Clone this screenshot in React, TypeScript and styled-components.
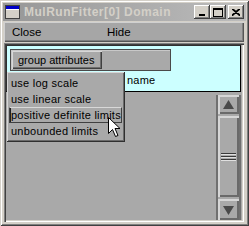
import React from 'react';
import styled, { createGlobalStyle } from 'styled-components';

const GlobalStyle = createGlobalStyle`
  html, body {
    margin: 0;
    padding: 0;
    background: #d4d0c8;
  }
  * {
    box-sizing: border-box;
  }
`;

const GREY = '#a9a9a9';

const Window = styled.div`
  position: relative;
  width: 249px;
  height: 226px;
  padding: 3px 3px 4px 3px;
  background: #d4d0c8;
  box-shadow: inset 1px 1px #d4d0c8, inset -1px -1px #404040, inset 2px 2px #ffffff,
    inset -2px -2px #808080;
  display: flex;
  flex-direction: column;
  font-family: 'Liberation Sans', Arial, sans-serif;
  font-size: 11px;
  color: #000;
`;

const TitleBar = styled.div`
  height: 18px;
  display: flex;
  align-items: center;
  padding: 0 2px 0 2px;
  background: linear-gradient(90deg, #979797 0%, #a9a9a9 50%, #bcbcbc 100%);
`;

const TitleText = styled.span`
  flex: 1;
  margin-left: 4px;
  font-weight: bold;
  font-size: 12px;
  letter-spacing: 0.5px;
  color: #d4d0c8;
  white-space: nowrap;
`;

const CaptionButton = styled.button<{ $gap?: boolean }>`
  width: 16px;
  height: 14px;
  padding: 0;
  margin-left: ${(p) => (p.$gap ? '2px' : '0')};
  border: none;
  background: #d4d0c8;
  box-shadow: inset -1px -1px #404040, inset 1px 1px #ffffff, inset -2px -2px #808080;
  display: flex;
  align-items: center;
  justify-content: center;
`;

const MenuBar = styled.div`
  height: 20px;
  margin: 1px 2px 0 1px;
  display: flex;
  align-items: center;
  background: #a6a6a6;
  box-shadow: inset 1px 1px #d0d0d0, inset -1px -1px #555555, inset -2px -2px #808080;
`;

const MenuItem = styled.span<{ $w: number }>`
  width: ${(p) => p.$w}px;
  padding-left: 8px;
  font-size: 11.5px;
`;

const ContentFrame = styled.div`
  flex: 1;
  margin: 1px 2px 0 1px;
  padding: 2px;
  display: flex;
  flex-direction: column;
  background: ${GREY};
  box-shadow: inset 1px 1px #808080, inset 2px 2px #404040, inset -1px -1px #ffffff,
    inset -2px -2px #d4d0c8;
`;

const CyanPanel = styled.div`
  height: 47px;
  margin-right: 1px;
  background: #ccffff;
  border: 1px solid #000;
  border-top-color: #303030;
  border-left-color: #303030;
  padding: 3px 0 0 3px;
`;

const OptionBar = styled.div`
  width: 161px;
  height: 22px;
  padding: 1px;
  background: ${GREY};
  border: 1px solid #4a4a4a;
  box-shadow: inset 1px 1px #c8c8c8;
`;

const OptionButton = styled.div`
  width: 90px;
  height: 18px;
  display: flex;
  align-items: center;
  padding-left: 6px;
  font-size: 11px;
  background: ${GREY};
  box-shadow: inset 1px 1px #d8d8d8, inset -1px -1px #404040, inset -2px -2px #6e6e6e;
`;

const NameLabel = styled.div`
  margin: 3px 0 0 117px;
  font-size: 11px;
  letter-spacing: 0.2px;
`;

const ScrollArea = styled.div`
  flex: 1;
  display: flex;
  justify-content: flex-end;
  padding: 3px 1px 0 0;
`;

const ScrollTrack = styled.div`
  width: 25px;
  display: flex;
  flex-direction: column;
  gap: 2px;
  padding: 0 2px;
  box-shadow: inset 2px 0 #707070, inset -2px 0 #707070;
`;

const ScrollButton = styled.div<{ $h: number }>`
  height: ${(p) => p.$h}px;
  flex: ${(p) => (p.$h ? '0 0 auto' : '1')};
  display: flex;
  flex-direction: column;
  align-items: center;
  justify-content: center;
  gap: 2px;
  background: ${GREY};
  box-shadow: inset 2px 2px #d6d6d6, inset -2px -2px #6a6a6a;
`;

const GripLine = styled.div`
  width: 15px;
  height: 1px;
  background: #3a3a3a;
  box-shadow: 0 1px #e0e0e0;
`;

const Popup = styled.div`
  position: absolute;
  left: 7px;
  top: 72px;
  width: 118px;
  height: 70px;
  padding: 3px 2px;
  background: ${GREY};
  border-right: 1px solid #303030;
  border-bottom: 1px solid #303030;
  box-shadow: inset 1px 1px #d6d6d6, inset -1px -1px #6a6a6a;
`;

const PopupItem = styled.div<{ $active?: boolean }>`
  height: 16px;
  display: flex;
  align-items: center;
  padding-left: ${(p) => (p.$active ? '1px' : '2px')};
  font-size: 11px;
  letter-spacing: 0.25px;
  white-space: nowrap;
  border: ${(p) => (p.$active ? '1px solid #404040' : 'none')};
  border-top-color: ${(p) => (p.$active ? '#d8d8d8' : 'transparent')};
  box-shadow: ${(p) => (p.$active ? 'inset 1px 0 #202020' : 'none')};
`;

const Pointer = styled.svg`
  position: absolute;
  left: 108px;
  top: 117px;
`;

const WindowIcon = () => (
  <svg width="15" height="14" viewBox="0 0 15 14">
    <rect x="0.5" y="0.5" width="14" height="13" fill="#d4d0c8" stroke="#404040" />
    <rect x="1" y="1" width="13" height="3" fill="#0000c8" />
    <rect x="1" y="4" width="13" height="1" fill="#ffffff" />
  </svg>
);

const Arrow = ({ down }: { down?: boolean }) => (
  <svg width="11" height="10" viewBox="0 0 11 10">
    <polygon points={down ? '0,1 11,1 5.5,10' : '5.5,0 11,9 0,9'} fill="#4a4a4a" />
  </svg>
);

const App: React.FC = () => (
  <>
    <GlobalStyle />
    <Window>
      <TitleBar>
        <WindowIcon />
        <TitleText>MulRunFitter[0] Domain</TitleText>
        <CaptionButton>
          <svg width="8" height="8" viewBox="0 0 8 8">
            <rect x="1" y="6" width="6" height="2" fill="#000" />
          </svg>
        </CaptionButton>
        <CaptionButton>
          <svg width="10" height="9" viewBox="0 0 10 9">
            <rect x="0.5" y="0.5" width="9" height="8" fill="none" stroke="#000" />
            <rect x="0" y="0" width="10" height="2" fill="#000" />
          </svg>
        </CaptionButton>
        <CaptionButton $gap>
          <svg width="8" height="7" viewBox="0 0 8 7">
            <path d="M0 0 L8 7 M8 0 L0 7 M1 0 L8 6 M7 0 L0 6" stroke="#000" strokeWidth="1.2" />
          </svg>
        </CaptionButton>
      </TitleBar>
      <MenuBar>
        <MenuItem $w={95}>Close</MenuItem>
        <MenuItem $w={60}>Hide</MenuItem>
      </MenuBar>
      <ContentFrame>
        <CyanPanel>
          <OptionBar>
            <OptionButton>group attributes</OptionButton>
          </OptionBar>
          <NameLabel>name</NameLabel>
        </CyanPanel>
        <ScrollArea>
          <ScrollTrack>
            <ScrollButton $h={19}>
              <Arrow />
            </ScrollButton>
            <ScrollButton $h={0}>
              <GripLine />
              <GripLine />
              <GripLine />
            </ScrollButton>
            <ScrollButton $h={21}>
              <Arrow down />
            </ScrollButton>
          </ScrollTrack>
        </ScrollArea>
      </ContentFrame>
      <Popup>
        <PopupItem>use log scale</PopupItem>
        <PopupItem>use linear scale</PopupItem>
        <PopupItem $active>positive definite limits</PopupItem>
        <PopupItem>unbounded limits</PopupItem>
      </Popup>
      <Pointer width="13" height="21" viewBox="0 0 13 21">
        <path
          d="M0.5 0.5 L0.5 16.5 L4.5 12.5 L7.5 19.5 L10 18.5 L7 11.5 L12 11.5 Z"
          fill="#ffffff"
          stroke="#000000"
          strokeWidth="1"
        />
      </Pointer>
    </Window>
  </>
);

export default App;
